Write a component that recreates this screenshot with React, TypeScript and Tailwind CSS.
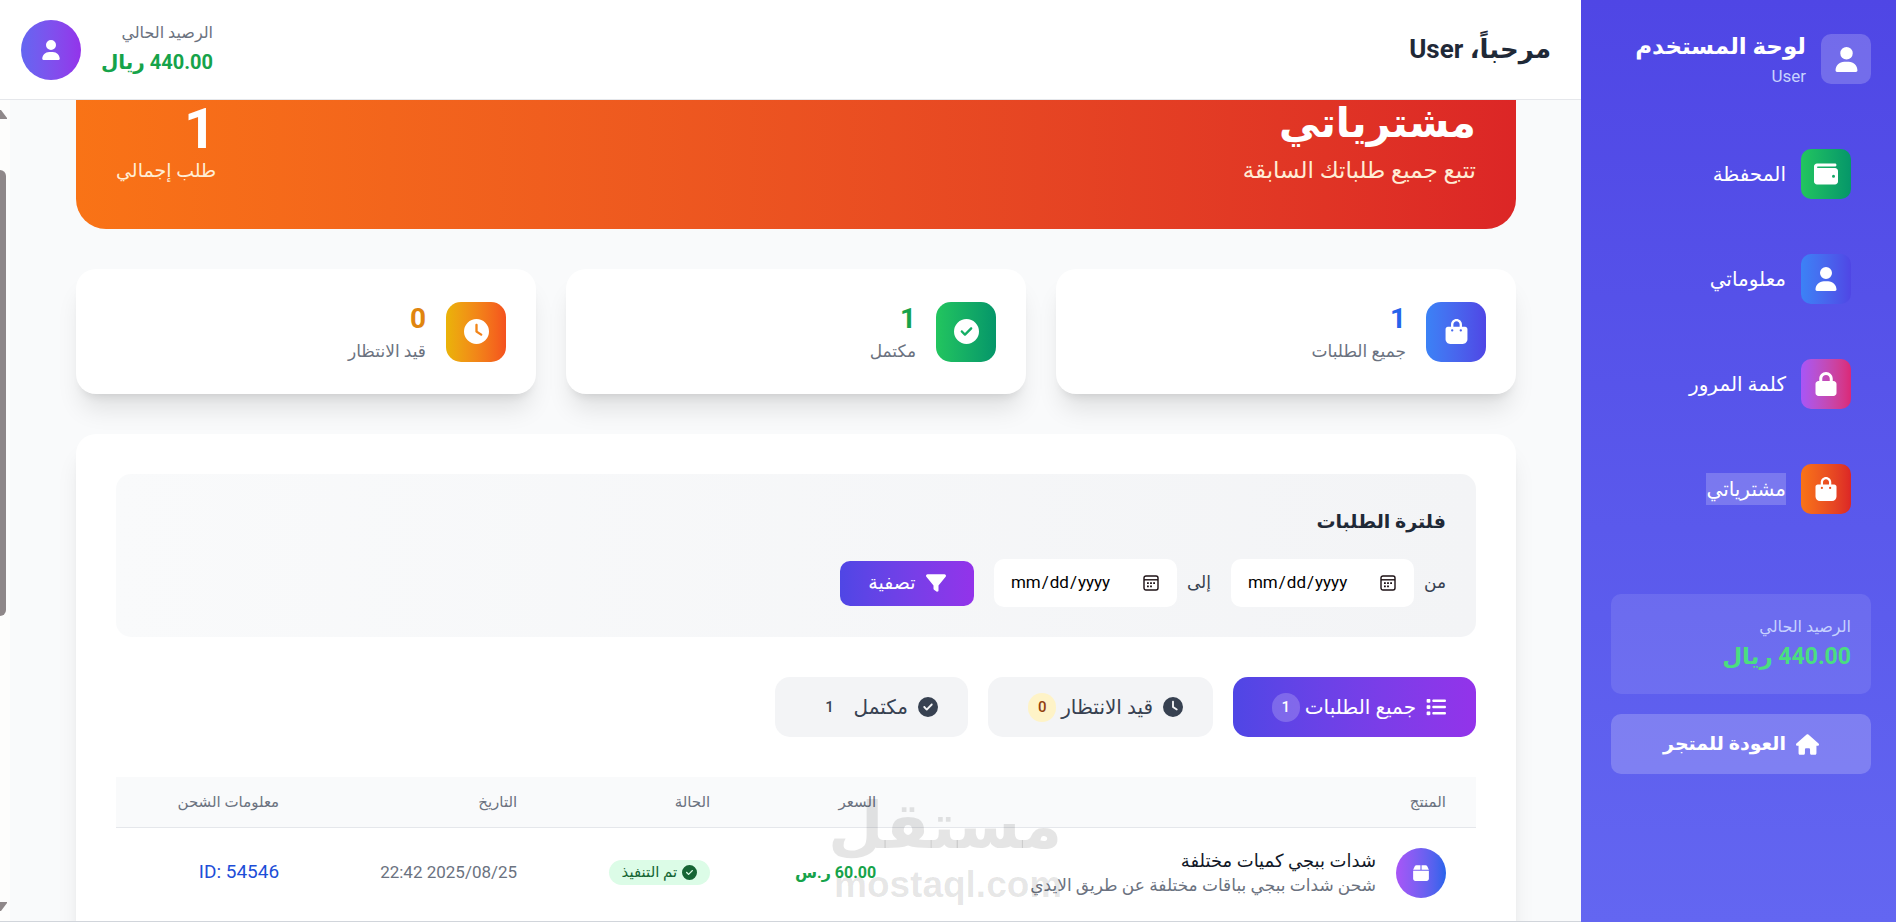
import {
  FaBagShopping,
  FaBox,
  FaCircleCheck,
  FaClock,
  FaFilter,
  FaHouse,
  FaList,
  FaLock,
  FaUser,
  FaWallet,
} from "react-icons/fa6";

const navItems = [
  { label: "المحفظة", icon: FaWallet, color: "from-[#22c55e] to-[#059669]" },
  { label: "معلوماتي", icon: FaUser, color: "from-[#3b82f6] to-[#4f46e5]" },
  { label: "كلمة المرور", icon: FaLock, color: "from-[#a855f7] to-[#db2777]" },
  { label: "مشترياتي", icon: FaBagShopping, color: "from-[#f97316] to-[#dc2626]", selected: true },
];

const stats = [
  { value: 1, label: "جميع الطلبات", icon: FaBagShopping, color: "from-[#3b82f6] to-[#4f46e5]", text: "text-[#2563eb]" },
  { value: 1, label: "مكتمل", icon: FaCircleCheck, color: "from-[#22c55e] to-[#059669]", text: "text-[#16a34a]" },
  { value: 0, label: "قيد الانتظار", icon: FaClock, color: "from-[#eab308] to-[#f4511e]", text: "text-[#e0850f]" },
];

const orders = [
  {
    title: "شدات ببجي كميات مختلفة",
    description: "شحن شدات ببجي بباقات مختلفة عن طريق الايدي",
    price: "60.00 ر.س",
    status: "تم التنفيذ",
    date: "22:42 2025/08/25",
    info: "ID: 54546",
  },
];

function Sidebar() {
  return (
    <aside className="flex w-[315px] shrink-0 flex-col bg-linear-to-b from-[#4f46e5] to-[#6366f1] pr-[25px] pl-[30px] text-white">
      <div className="flex items-center gap-[15px] pt-[30px]">
        <div className="flex size-[50px] items-center justify-center rounded-[10px] bg-white/20">
          <FaUser className="size-[25px]" />
        </div>
        <div>
          <h2 className="text-[23px] leading-[34px] font-bold whitespace-nowrap">لوحة المستخدم</h2>
          <p className="text-[17px] leading-6 text-[#c7d2fe]">User</p>
        </div>
      </div>

      <nav className="mt-[41px] flex flex-col gap-[15px]">
        {navItems.map((item) => (
          <a key={item.label} href="#" className="flex items-center gap-[15px] px-5 py-5">
            <span className={`flex size-[50px] items-center justify-center rounded-[10px] bg-linear-to-r ${item.color}`}>
              <item.icon className="size-6" />
            </span>
            <span className={`text-[20px] leading-8 font-medium ${item.selected ? "bg-white/20" : ""}`}>{item.label}</span>
          </a>
        ))}
      </nav>

      <div className="mt-[60px] rounded-[10px] bg-white/10 px-5 py-5">
        <p className="text-[16px] leading-[25px] text-[#c7d2fe]">الرصيد الحالي</p>
        <p className="text-[23px] leading-[35px] font-bold text-[#4ade80]">440.00 ريال</p>
      </div>
      <a href="#" className="mt-5 flex h-[60px] items-center justify-center gap-[10px] rounded-[10px] bg-white/20 text-[19px] font-bold">
        <FaHouse className="size-[23px]" />
        العودة للمتجر
      </a>
    </aside>
  );
}

function Header() {
  return (
    <header className="flex h-[100px] shrink-0 items-center justify-between border-b border-[#e5e7eb] bg-white pr-[30px] pl-[21px]">
      <h1 className="text-[26px] font-bold text-[#1f2937]">مرحباً، User</h1>
      <div className="flex items-center gap-5">
        <div>
          <p className="text-[16px] leading-[25px] text-[#6b7280]">الرصيد الحالي</p>
          <p className="text-[20px] leading-[35px] font-bold text-[#16a34a]">440.00 ريال</p>
        </div>
        <button aria-label="الحساب" className="flex size-[60px] items-center justify-center rounded-full bg-linear-to-r from-[#6366f1] to-[#9333ea] text-white">
          <FaUser className="size-5" />
        </button>
      </div>
    </header>
  );
}

function DateField({ label }: { label: string }) {
  return (
    <label className="flex items-center gap-[10px] text-[17px] text-[#374151]">
      {label}
      <span className="relative">
        <input
          type="date"
          dir="ltr"
          className="block h-12 w-[183px] rounded-[10px] bg-white px-4 text-[17px] text-black [&::-webkit-calendar-picker-indicator]:opacity-0"
        />
        <svg className="pointer-events-none absolute top-4 right-[18px] size-4" viewBox="0 0 16 16" fill="none" stroke="#1c1014">
          <rect x="1" y="1" width="14" height="14" rx="2" strokeWidth="1.4" />
          <path d="M1 4.8h14" strokeWidth="1.4" />
          <path d="M4 8.2h1.8M7.1 8.2h1.8M10.2 8.2H12M4 11.4h1.8M7.1 11.4h1.8" strokeWidth="1.8" />
        </svg>
      </span>
    </label>
  );
}

function Filters() {
  return (
    <form className="rounded-[15px] bg-linear-to-r from-[#f9fafb] to-[#f3f4f6] p-[30px]">
      <h3 className="mb-5 text-[19px] leading-[35px] font-bold text-[#1f2937]">فلترة الطلبات</h3>
      <div className="flex items-center gap-5">
        <DateField label="من" />
        <DateField label="إلى" />
        <button type="button" className="flex h-[45px] w-[134px] items-center justify-center gap-[10px] rounded-[10px] bg-linear-to-r from-[#4f46e5] to-[#9333ea] text-[19px] font-medium text-white">
          <FaFilter className="size-5" />
          تصفية
        </button>
      </div>
    </form>
  );
}

function Tabs() {
  return (
    <div className="mt-10 flex gap-5">
      <button className="flex h-[60px] w-[243px] items-center rounded-[15px] bg-linear-to-r from-[#4f46e5] to-[#9333ea] px-[30px] text-[20px] font-medium whitespace-nowrap text-white">
        <FaList className="ml-[10px] size-5 shrink-0" />
        جميع الطلبات
        <span className="mr-[5px] flex h-[29px] w-7 items-center justify-center rounded-full bg-white/20 text-[15px]">1</span>
      </button>
      <button className="flex h-[60px] w-[225px] items-center rounded-[15px] bg-[#f3f4f6] px-[30px] text-[20px] font-medium whitespace-nowrap text-[#374151]">
        <FaClock className="ml-[10px] size-5 shrink-0" />
        قيد الانتظار
        <span className="mr-[5px] flex h-[29px] w-7 items-center justify-center rounded-full bg-[#fef3c7] text-[15px] text-[#92400e]">0</span>
      </button>
      <button className="flex h-[60px] w-[193px] items-center rounded-[15px] bg-[#f3f4f6] px-[30px] text-[20px] font-medium whitespace-nowrap text-[#374151]">
        <FaCircleCheck className="ml-[10px] size-5 shrink-0" />
        مكتمل
        <span className="mr-[10px] flex h-[29px] w-7 items-center justify-center text-[15px]">1</span>
      </button>
    </div>
  );
}

function OrdersTable() {
  return (
    <div className="relative mt-10">
      <table className="w-full table-fixed">
        <thead className="border-b border-[#e5e7eb] bg-[#f9fafb] text-[15px] text-[#6b7280]">
          <tr className="h-[50px]">
            <th className="w-[41.9%] px-[30px] text-right font-normal">المنتج</th>
            <th className="w-[12.2%] px-[30px] text-right font-normal">السعر</th>
            <th className="w-[14.2%] px-[30px] text-right font-normal">الحالة</th>
            <th className="w-[17.5%] px-[30px] text-right font-normal">التاريخ</th>
            <th className="px-[30px] text-right font-normal">معلومات الشحن</th>
          </tr>
        </thead>
        <tbody>
          {orders.map((order) => (
            <tr key={order.info} className="whitespace-nowrap">
              <td className="px-[30px] py-5">
                <div className="flex items-center gap-5">
                  <div className="flex size-[50px] items-center justify-center rounded-full bg-linear-to-r from-[#a855f7] to-[#2563eb] text-white">
                    <FaBox className="size-[18px]" />
                  </div>
                  <div>
                    <p className="text-[18px] leading-[25px] text-[#111827]">{order.title}</p>
                    <p className="text-[17px] leading-[25px] text-[#6b7280]">{order.description}</p>
                  </div>
                </div>
              </td>
              <td className="px-[30px] text-[16px] font-bold text-[#16a34a]">{order.price}</td>
              <td className="px-[30px]">
                <span className="inline-flex h-[25px] items-center gap-[5px] rounded-full bg-[#dcfce7] px-[13px] align-middle text-[15px] text-[#166534]">
                  <FaCircleCheck className="size-[15px]" />
                  {order.status}
                </span>
              </td>
              <td dir="ltr" className="px-[30px] text-right text-[17px] text-[#6b7280]">{order.date}</td>
              <td dir="ltr" className="px-[30px] text-right text-[19px] text-[#1d4ed8]">{order.info}</td>
            </tr>
          ))}
        </tbody>
      </table>

      {/* Watermark */}
      <div className="pointer-events-none absolute top-[10px] right-[414px] w-[228px] text-center font-bold text-black/10">
        <p className="text-[64px] leading-[80px] whitespace-nowrap">مستقل</p>
        <p dir="ltr" className="font-['Liberation_Sans',sans-serif] text-[37px] leading-[36px]">mostaql.com</p>
      </div>
    </div>
  );
}

export default function App() {
  return (
    <div dir="rtl" className="flex h-screen overflow-hidden bg-[#f9fafb] font-[Roboto,'DejaVu_Sans',sans-serif]">
      <Sidebar />
      <div className="flex min-w-0 flex-1 flex-col border-b border-[#d1d5db]">
        <Header />
        <div className="flex min-h-0 flex-1">
          <main className="flex-1 overflow-hidden pr-[65px] pl-[66px]">
            <section className="-mt-[47px] flex items-end justify-between rounded-[30px] bg-linear-to-r from-[#f97316] to-[#dc2626] p-10 text-white">
              <div>
                <h2 className="text-[41px] leading-[60px] font-bold">مشترياتي</h2>
                <p className="text-[23px] leading-9 text-[#ffedd5]">تتبع جميع طلباتك السابقة</p>
              </div>
              <div>
                <p className="text-[56px] leading-[48px] font-bold">1</p>
                <p className="text-[19px] leading-9 text-[#ffedd5]">طلب إجمالي</p>
              </div>
            </section>

            <section className="mt-10 grid grid-cols-3 gap-[30px]">
              {stats.map((stat) => (
                <div key={stat.label} className="flex h-[125px] items-center gap-5 rounded-[20px] bg-white px-[30px] shadow-xl">
                  <div className={`flex size-[60px] items-center justify-center rounded-[15px] bg-linear-to-r text-white ${stat.color}`}>
                    <stat.icon className="size-[25px]" />
                  </div>
                  <div>
                    <p className={`text-[28px] leading-10 font-bold ${stat.text}`}>{stat.value}</p>
                    <p className="text-[17px] leading-[25px] text-[#6b7280]">{stat.label}</p>
                  </div>
                </div>
              ))}
            </section>

            <section className="mt-10 h-[800px] rounded-[20px] bg-white p-10 shadow-xl">
              <Filters />
              <Tabs />
              <OrdersTable />
            </section>
          </main>

          {/* Scrollbar */}
          <div className="flex w-[10px] flex-col items-end bg-[#fdfdfc] py-[10px]">
            <svg className="h-[9px] w-[7px] fill-[#8f8889]" viewBox="0 0 7 9">
              <path d="M0 0h1l6 8v1H0z" />
            </svg>
            <div className="mt-[51px] h-[446px] w-[6px] rounded-r-md bg-[#8f8889]" />
            <svg className="mt-auto h-[9px] w-[7px] fill-[#8f8889]" viewBox="0 0 7 9">
              <path d="M0 9h1l6-8V0H0z" />
            </svg>
          </div>
        </div>
      </div>
    </div>
  );
}
